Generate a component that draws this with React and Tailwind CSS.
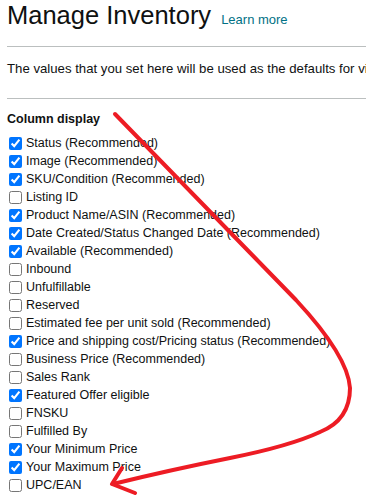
import React from 'react';

const columns = [
  { label: 'Status (Recommended)', checked: true },
  { label: 'Image (Recommended)', checked: true },
  { label: 'SKU/Condition (Recommended)', checked: true },
  { label: 'Listing ID', checked: false },
  { label: 'Product Name/ASIN (Recommended)', checked: true },
  { label: 'Date Created/Status Changed Date (Recommended)', checked: true },
  { label: 'Available (Recommended)', checked: true },
  { label: 'Inbound', checked: false },
  { label: 'Unfulfillable', checked: false },
  { label: 'Reserved', checked: false },
  { label: 'Estimated fee per unit sold (Recommended)', checked: false },
  { label: 'Price and shipping cost/Pricing status (Recommended)', checked: true },
  { label: 'Business Price (Recommended)', checked: false },
  { label: 'Sales Rank', checked: false },
  { label: 'Featured Offer eligible', checked: true },
  { label: 'FNSKU', checked: false },
  { label: 'Fulfilled By', checked: false },
  { label: 'Your Minimum Price', checked: true },
  { label: 'Your Maximum Price', checked: true },
  { label: 'UPC/EAN', checked: false },
];

const App = () => {
  return (
    <div className="relative w-[366px] h-[495px] overflow-hidden bg-white text-[#0f1111] font-['Liberation_Sans',Arial,sans-serif]">
      <div className="pl-[7px]">
        <div className="flex items-baseline h-[36px] whitespace-nowrap">
          <h1 className="text-[25.5px] leading-[31px] font-normal text-[#0f1111]">Manage Inventory</h1>
          <a href="#" className="ml-[10px] text-[13px] text-[#007185]">Learn more</a>
        </div>
        <div className="mt-[10px] border-t border-[#bbbfbf]"></div>
        <p className="mt-[13px] text-[13.2px] leading-[18px] whitespace-nowrap">
          The values that you set here will be used as the defaults for viewing your inventory.
        </p>
        <div className="mt-[20px] border-t border-[#bbbfbf]"></div>
        <h2 className="mt-[11px] text-[12.5px] leading-[18px] font-bold">Column display</h2>
        <ul className="mt-[6px]">
          {columns.map((col) => (
            <li key={col.label} className="flex items-center h-[18px] whitespace-nowrap">
              <input
                type="checkbox"
                defaultChecked={col.checked}
                className="m-0 ml-[2px] w-[13px] h-[13px] accent-[#0075ff]"
              />
              <span className="ml-[4px] text-[12.5px] leading-[18px]">{col.label}</span>
            </li>
          ))}
        </ul>
      </div>

      <svg
        className="absolute inset-0 pointer-events-none"
        width="366"
        height="495"
        viewBox="0 0 366 495"
        fill="none"
      >
        <path
          d="M115 114 L296 300 Q348 356 350 388 Q350 420 320 432 Q290 446 230 458 Q170 470 113 484"
          stroke="#ed1c24"
          strokeWidth="4"
          strokeLinecap="round"
          strokeLinejoin="round"
        />
        <path
          d="M122 468 L112 484 L135 493"
          stroke="#ed1c24"
          strokeWidth="4"
          strokeLinecap="round"
          strokeLinejoin="round"
        />
      </svg>
    </div>
  );
};

export default App;
